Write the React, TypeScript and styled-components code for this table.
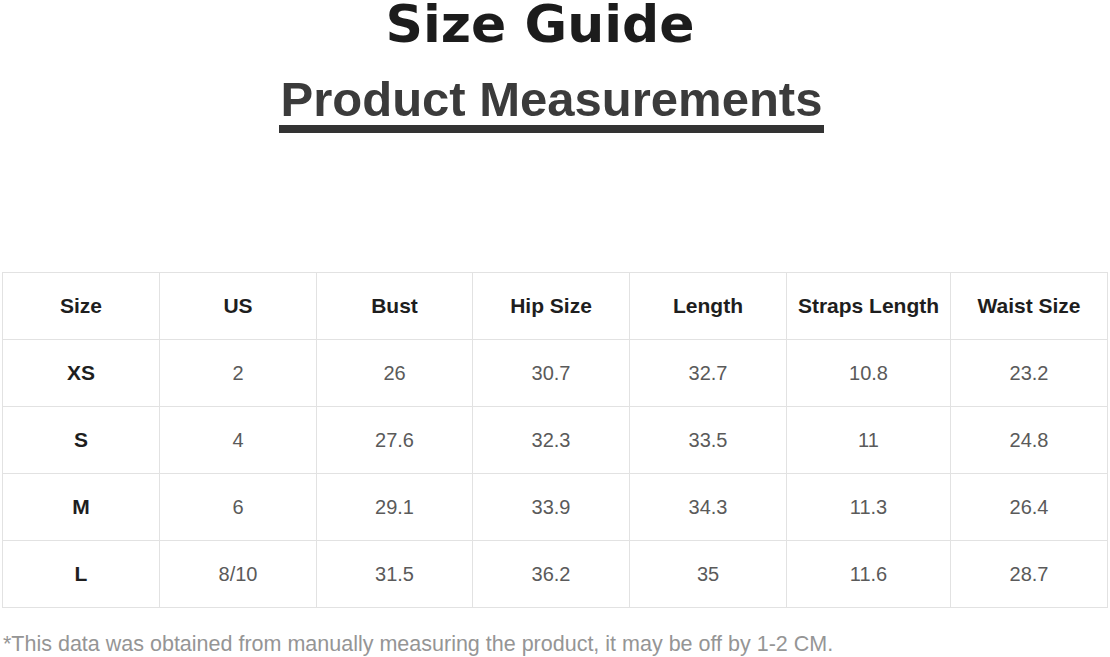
import styled, { createGlobalStyle } from "styled-components";

const GlobalStyle = createGlobalStyle`
  body {
    margin: 0;
    background: #ffffff;
    font-family: "Liberation Sans", Arial, sans-serif;
  }
`;

const Page = styled.div`
  width: 1110px;
  height: 657px;
  overflow: hidden;
  display: flex;
  flex-direction: column;
  align-items: center;
`;

const Title = styled.h1`
  margin: 0 30px 0 0;
  font-family: "DejaVu Sans", sans-serif;
  font-weight: 700;
  font-size: 52px;
  line-height: 48px;
  color: #1c1c1c;
`;

const Subtitle = styled.h2`
  margin: 26px 7px 0 0;
  font-family: "Liberation Sans", Arial, sans-serif;
  font-weight: 700;
  font-size: 49px;
  line-height: 50px;
  color: #3b3b3b;
  padding: 0 2px 1px;
  border-bottom: 8px solid #333333;
`;

const Table = styled.table`
  margin-top: 139px;
  margin-left: 2px;
  align-self: flex-start;
  width: 1106px;
  border-collapse: collapse;
  table-layout: fixed;
`;

const Cell = styled.td<{ $head?: boolean }>`
  border: 1px solid #e2e2e2;
  height: 66px;
  padding: 0;
  text-align: center;
  vertical-align: middle;
  font-size: ${(p) => (p.$head ? "21px" : "20px")};
  font-weight: ${(p) => (p.$head ? 700 : 400)};
  color: ${(p) => (p.$head ? "#1e1e1e" : "#5a5a5a")};
`;

const Note = styled.p`
  align-self: flex-start;
  margin: 24px 0 0 3px;
  font-size: 21.5px;
  line-height: 24px;
  color: #959595;
`;

const widths = [157, 157, 156, 157, 157, 164, 157];
const headers = ["Size", "US", "Bust", "Hip Size", "Length", "Straps Length", "Waist Size"];
const rows = [
  ["XS", "2", "26", "30.7", "32.7", "10.8", "23.2"],
  ["S", "4", "27.6", "32.3", "33.5", "11", "24.8"],
  ["M", "6", "29.1", "33.9", "34.3", "11.3", "26.4"],
  ["L", "8/10", "31.5", "36.2", "35", "11.6", "28.7"],
];

export default function App() {
  return (
    <>
      <GlobalStyle />
      <Page>
        <Title>Size Guide</Title>
        <Subtitle>Product Measurements</Subtitle>
        <Table>
          <colgroup>
            {widths.map((w, i) => (
              <col key={i} style={{ width: w }} />
            ))}
          </colgroup>
          <tbody>
            <tr>
              {headers.map((h) => (
                <Cell key={h} $head>
                  {h}
                </Cell>
              ))}
            </tr>
            {rows.map((r) => (
              <tr key={r[0]}>
                {r.map((v, i) => (
                  <Cell key={i} $head={i === 0}>
                    {v}
                  </Cell>
                ))}
              </tr>
            ))}
          </tbody>
        </Table>
        <Note>
          *This data was obtained from manually measuring the product, it may be off by 1-2 CM.
        </Note>
      </Page>
    </>
  );
}
